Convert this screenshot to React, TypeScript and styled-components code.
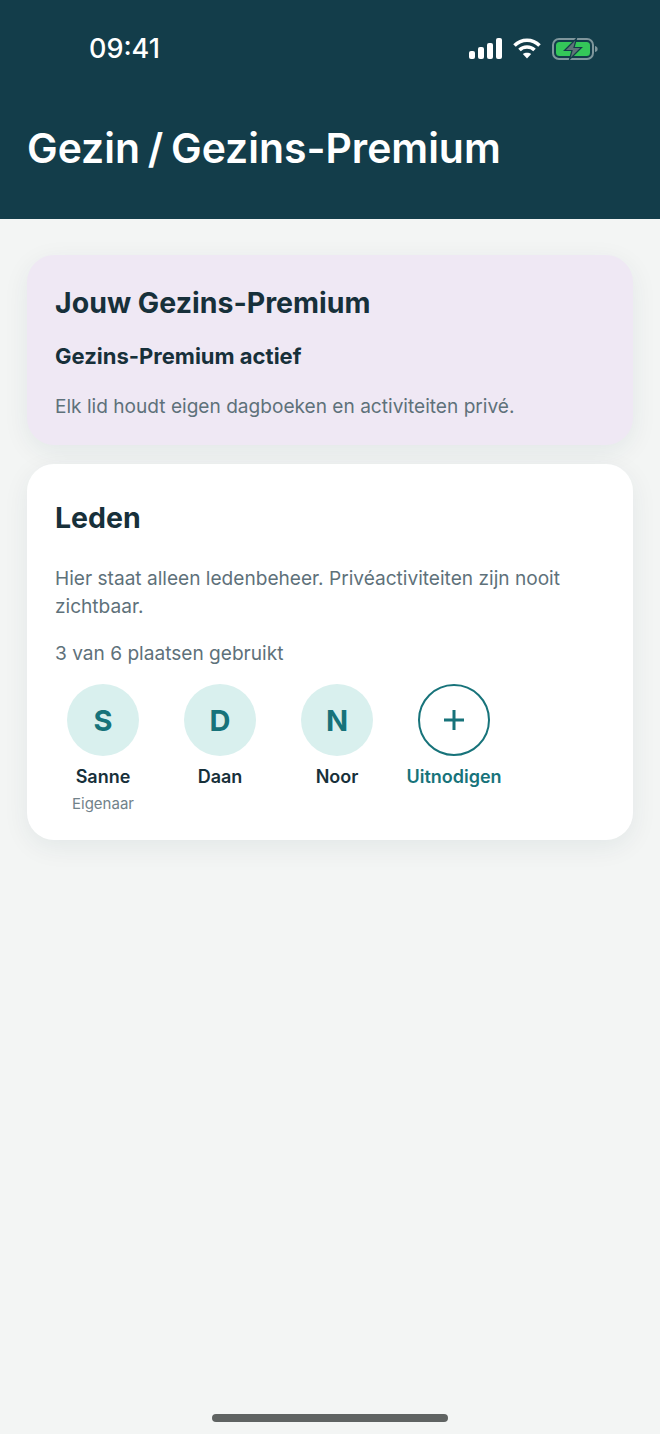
import React from 'react';
import styled, { createGlobalStyle } from 'styled-components';

const GlobalStyle = createGlobalStyle`
  html, body {
    margin: 0;
    padding: 0;
    background: #f3f5f4;
    font-family: Inter, "Liberation Sans", sans-serif;
  }
`;

const Screen = styled.div`
  position: relative;
  width: 660px;
  height: 1434px;
  overflow: hidden;
  background: #f3f5f4;
`;

const Header = styled.header`
  height: 219px;
  box-sizing: border-box;
  background: #133d4a;
  color: #fff;
  display: flex;
  flex-direction: column;
`;

const StatusBar = styled.div`
  height: 123px;
  flex-shrink: 0;
  display: flex;
  align-items: flex-start;
  justify-content: space-between;
  padding: 32px 62px 0 89px;
  box-sizing: border-box;
`;

const Clock = styled.span`
  font-size: 27px;
  line-height: 33px;
  font-weight: 500;
`;

const StatusIcons = styled.div`
  display: flex;
  align-items: center;
  gap: 11px;
  height: 33px;
`;

const Title = styled.h1`
  margin: 0;
  padding-left: 27px;
  font-size: 40.9px;
  line-height: 50px;
  font-weight: 600;
  word-spacing: -2.5px;
`;

const Content = styled.main`
  display: flex;
  flex-direction: column;
  gap: 19px;
  padding: 36px 27px 0;
`;

const Card = styled.section<{ $tint?: boolean }>`
  border-radius: 27px;
  padding: ${({ $tint }) => ($tint ? '27px 28px 25px' : '33px 28px 26px')};
  background: ${({ $tint }) => ($tint ? '#efe8f4' : '#ffffff')};
  box-shadow: 0 7px 27px rgba(19, 61, 74, 0.07);
`;

const CardTitle = styled.h2`
  margin: 0;
  font-size: 28.5px;
  line-height: 41px;
  font-weight: 700;
  color: #17303a;
`;

const Subtitle = styled.h3`
  margin: 18px 0 0;
  font-size: 22px;
  line-height: 30px;
  font-weight: 700;
  color: #17303a;
`;

const Body = styled.p<{ $gap: number }>`
  margin: ${({ $gap }) => $gap}px 0 0;
  font-size: 19.1px;
  line-height: 28px;
  color: #5e717a;
`;

const Members = styled.div`
  display: flex;
  gap: 21px;
  margin-top: 17px;
`;

const Member = styled.div`
  width: 96px;
  display: flex;
  flex-direction: column;
  align-items: center;
`;

const Avatar = styled.div<{ $outlined?: boolean }>`
  width: 72px;
  height: 72px;
  box-sizing: border-box;
  border-radius: 50%;
  display: flex;
  align-items: center;
  justify-content: center;
  font-size: 29px;
  font-weight: 700;
  color: #17737a;
  background: ${({ $outlined }) => ($outlined ? 'transparent' : '#d9f0ee')};
  border: ${({ $outlined }) => ($outlined ? '2.5px solid #17737a' : 'none')};
`;

const MemberName = styled.span<{ $accent?: boolean }>`
  margin-top: 8px;
  font-size: 18px;
  line-height: 25px;
  font-weight: 600;
  white-space: nowrap;
  color: ${({ $accent }) => ($accent ? '#17737a' : '#17303a')};
`;

const MemberRole = styled.span`
  margin-top: 5px;
  font-size: 15px;
  line-height: 20px;
  color: #71828a;
`;

const HomeIndicator = styled.div`
  position: absolute;
  left: 212px;
  bottom: 12px;
  width: 236px;
  height: 8px;
  border-radius: 4px;
  background: #5f6362;
`;

const members = [
  { initial: 'S', name: 'Sanne', role: 'Eigenaar' },
  { initial: 'D', name: 'Daan' },
  { initial: 'N', name: 'Noor' },
];

const SignalIcon = () => (
  <svg width="33" height="21" viewBox="0 0 33 21" fill="#fff" aria-hidden="true">
    <rect x="0" y="13" width="6" height="8" rx="2" />
    <rect x="9" y="9" width="6" height="12" rx="2" />
    <rect x="18" y="5" width="6" height="16" rx="2" />
    <rect x="27" y="0" width="6" height="21" rx="2" />
  </svg>
);

const WifiIcon = () => (
  <svg width="28" height="21" viewBox="0 0 28 21" fill="none" stroke="#fff" strokeWidth="3.6" aria-hidden="true">
    <path d="M1.5 7.5 C8.5 0.5 19.5 0.5 26.5 7.5" />
    <path d="M6.5 12 C10.5 8 17.5 8 21.5 12" />
    <path d="M14 20.5 L9.8 16 C12 14.2 16 14.2 18.2 16 Z" fill="#fff" stroke="none" />
  </svg>
);

const BatteryIcon = () => (
  <svg width="46" height="22" viewBox="0 0 46 22" fill="none" aria-hidden="true">
    <rect x="1" y="1" width="40" height="20" rx="6" stroke="#7f969c" strokeWidth="2" />
    <rect x="4" y="4" width="34" height="14" rx="3.5" fill="#34c759" />
    <path d="M43 8 C45 8.5 45.6 9.5 45.6 11 C45.6 12.5 45 13.5 43 14 Z" fill="#7f969c" />
    <path d="M24.5 0.5 L12.5 12.5 H20 L17.5 21.5 L29.5 9.5 H22 Z" fill="#5f7378" stroke="#133d4a" strokeWidth="1.2" />
  </svg>
);

const PlusIcon = () => (
  <svg width="24" height="24" viewBox="0 0 24 24" stroke="#17737a" strokeWidth="3" aria-hidden="true">
    <path d="M12 2 V22 M2 12 H22" />
  </svg>
);

export default function App() {
  return (
    <Screen>
      <GlobalStyle />
      <Header>
        <StatusBar>
          <Clock>09:41</Clock>
          <StatusIcons>
            <SignalIcon />
            <WifiIcon />
            <BatteryIcon />
          </StatusIcons>
        </StatusBar>
        <Title>Gezin / Gezins-Premium</Title>
      </Header>
      <Content>
        <Card $tint>
          <CardTitle>Jouw Gezins-Premium</CardTitle>
          <Subtitle>Gezins-Premium actief</Subtitle>
          <Body $gap={21}>Elk lid houdt eigen dagboeken en activiteiten privé.</Body>
        </Card>
        <Card>
          <CardTitle>Leden</CardTitle>
          <Body $gap={26}>Hier staat alleen ledenbeheer. Privéactiviteiten zijn nooit zichtbaar.</Body>
          <Body $gap={19}>3 van 6 plaatsen gebruikt</Body>
          <Members>
            {members.map((member) => (
              <Member key={member.name}>
                <Avatar>{member.initial}</Avatar>
                <MemberName>{member.name}</MemberName>
                {member.role && <MemberRole>{member.role}</MemberRole>}
              </Member>
            ))}
            <Member>
              <Avatar $outlined>
                <PlusIcon />
              </Avatar>
              <MemberName $accent>Uitnodigen</MemberName>
            </Member>
          </Members>
        </Card>
      </Content>
      <HomeIndicator />
    </Screen>
  );
}
